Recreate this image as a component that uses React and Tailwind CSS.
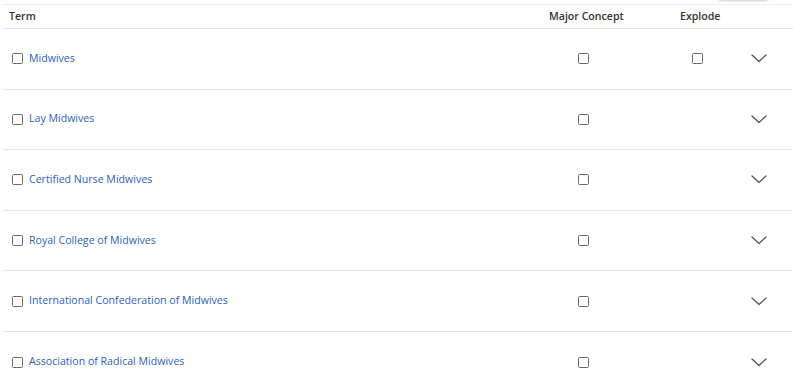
// App.jsx
const TERMS = [
  { name: "Midwives", explode: true },
  { name: "Lay Midwives" },
  { name: "Certified Nurse Midwives" },
  { name: "Royal College of Midwives" },
  { name: "International Confederation of Midwives" },
  { name: "Association of Radical Midwives" },
];

function Box() {
  return (
    <span className="block h-[11px] w-[11px] rounded-[1.5px] border-[1.5px] border-[#6a6a6a] bg-white" />
  );
}

function Chevron() {
  return (
    <svg width="16" height="9" viewBox="0 0 16 9" fill="none" className="block">
      <path d="M1 1l7 6.5L15 1" stroke="#555" strokeWidth="1.3" strokeLinecap="round" strokeLinejoin="round" />
    </svg>
  );
}

export default function App() {
  return (
    <div
      className="relative h-[387px] w-[800px] overflow-hidden bg-white text-[10.6px]"
      style={{ fontFamily: '"Open Sans", "Noto Sans", sans-serif' }}
    >
      {/* edge of a floating card above the table */}
      <div className="absolute left-[716px] top-[-12px] h-[12px] w-[54px] rounded-md bg-white shadow-[0_1px_3px_rgba(0,0,0,0.2)]" />

      <div className="mx-[3px] mt-[4px] w-[790px] border-t border-[#f0f0f0]">
        {/* header */}
        <div className="grid h-[24px] grid-cols-[537px_110px_80px_63px] items-center border-b border-[#e3e3e3] font-semibold text-[#333]">
          <div className="pl-[6px]">Term</div>
          <div className="pl-[9px]">Major Concept</div>
          <div className="pl-[30px]">Explode</div>
          <div />
        </div>

        {TERMS.map((t, i) => (
          <div
            key={t.name}
            className={`grid h-[60.6px] grid-cols-[537px_110px_80px_63px] items-center ${i < TERMS.length - 1 ? "border-b border-[#e8e8e8]" : ""}`}
          >
            <div className="flex items-center gap-[6px] pl-[9px]">
              <Box />
              <a className="cursor-pointer text-[#2f5fb5]">{t.name}</a>
            </div>
            <div className="pl-[38px]">
              <Box />
            </div>
            <div className="pl-[42px]">{t.explode && <Box />}</div>
            <div className="pl-[21px]">
              <Chevron />
            </div>
          </div>
        ))}
      </div>
    </div>
  );
}
